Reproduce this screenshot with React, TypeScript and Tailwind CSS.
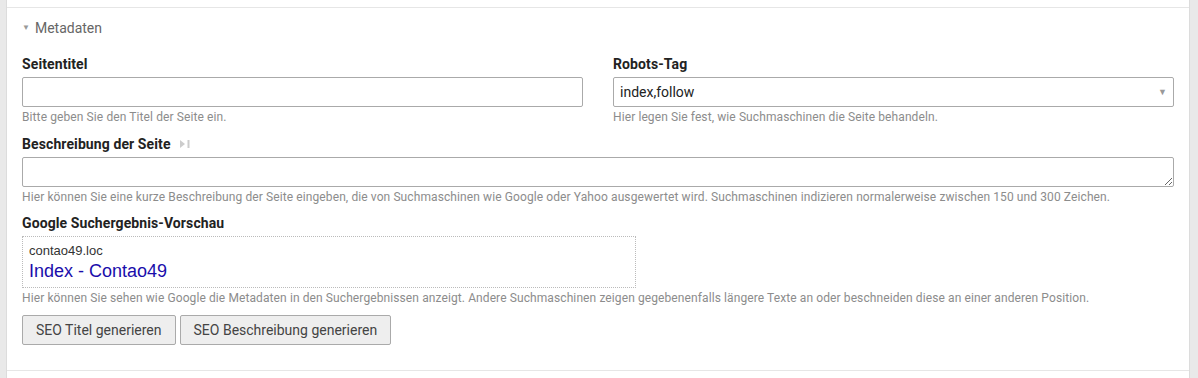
import { ChangeEvent, useState } from 'react'
import clsx from 'clsx'

const font = 'font-["Roboto",sans-serif]'

function Label(props: { children: React.ReactNode }) {
  return (
    <h3 className="text-[14px] font-bold leading-[16px] text-[#222] tracking-[0.1px] pb-[5px]">
      {props.children}
    </h3>
  )
}

function Help(props: { children: React.ReactNode }) {
  return (
    <p className="text-[12px] leading-[14px] text-[#8c8c8c] tracking-[0.1px] pt-[3px]">
      {props.children}
    </p>
  )
}

export default function App() {
  const [title, setTitle] = useState('')
  const [robots, setRobots] = useState('index,follow')
  const [description, setDescription] = useState('')

  return (
    <div className={clsx('min-h-[378px] bg-[#e9e9e9] pl-[6px] pr-[8px]', font)}>
      <div className="min-h-[378px] bg-white border-l border-r border-[#dcdcdc]">
        <div className="h-[8px] border-b border-[#e6e6e6]" />
        <div className="px-[15px] pt-[12px] pb-[25px] border-b border-[#e6e6e6]">
          <div className="flex items-center text-[14px] text-[#666] leading-[16px]">
            <span className="text-[8px] text-[#999] pr-[5px]">▼</span>
            Metadaten
          </div>

          <div className="grid grid-cols-2 gap-x-[30px] pt-[20px]">
            <div>
              <Label>Seitentitel</Label>
              <input
                type="text"
                value={title}
                onChange={(e: ChangeEvent<HTMLInputElement>) => setTitle(e.target.value)}
                className="block w-full h-[30px] border border-[#aaa] rounded-[2px] px-[6px] text-[14px] outline-none"
              />
              <Help>Bitte geben Sie den Titel der Seite ein.</Help>
            </div>
            <div>
              <Label>Robots-Tag</Label>
              <div className="relative">
                <select
                  value={robots}
                  onChange={(e) => setRobots(e.target.value)}
                  className="block w-full h-[30px] appearance-none border border-[#aaa] rounded-[2px] pl-[6px] pr-[24px] text-[14px] text-[#222] bg-white outline-none"
                >
                  <option>index,follow</option>
                  <option>index,nofollow</option>
                  <option>noindex,follow</option>
                  <option>noindex,nofollow</option>
                </select>
                <span className="absolute right-[7px] top-[9px] text-[9px] text-[#999] pointer-events-none">
                  ▼
                </span>
              </div>
              <Help>Hier legen Sie fest, wie Suchmaschinen die Seite behandeln.</Help>
            </div>
          </div>

          <div className="pt-[12px]">
            <div className="flex items-center">
              <Label>Beschreibung der Seite</Label>
              <svg width="12" height="10" viewBox="0 0 12 10" className="ml-[8px] mb-[5px]">
                <path d="M1 1 L6 5 L1 9 Z" fill="#ccc" />
                <rect x="8.5" y="1" width="2" height="8" fill="#ccc" />
              </svg>
            </div>
            <textarea
              value={description}
              onChange={(e) => setDescription(e.target.value)}
              className="block w-full h-[30px] border border-[#aaa] rounded-[2px] px-[6px] text-[14px] outline-none"
            />
            <Help>
              Hier können Sie eine kurze Beschreibung der Seite eingeben, die von Suchmaschinen wie Google oder Yahoo ausgewertet wird. Suchmaschinen indizieren normalerweise zwischen 150 und 300 Zeichen.
            </Help>
          </div>

          <div className="pt-[11px]">
            <Label>Google Suchergebnis-Vorschau</Label>
            <div className="w-[614px] h-[52px] border border-dotted border-[#bbb] px-[6px] pt-[6px] font-['Liberation_Sans',Arial,sans-serif]">
              <div className="text-[13px] leading-[16px] text-[#333]">contao49.loc</div>
              <div className="text-[18px] leading-[24px] text-[#1a0dab]">Index - {'Contao49'}</div>
            </div>
            <Help>
              Hier können Sie sehen wie Google die Metadaten in den Suchergebnissen anzeigt. Andere Suchmaschinen zeigen gegebenenfalls längere Texte an oder beschneiden diese an einer anderen Position.
            </Help>
          </div>

          <div className="flex gap-[4px] pt-[10px]">
            <button className="h-[30px] px-[13px] bg-[#eee] border border-[#aaa] rounded-[2px] text-[14px] text-[#444]">
              SEO Titel generieren
            </button>
            <button className="h-[30px] px-[13px] bg-[#eee] border border-[#aaa] rounded-[2px] text-[14px] text-[#444]">
              SEO Beschreibung generieren
            </button>
          </div>
        </div>
      </div>
    </div>
  )
}
